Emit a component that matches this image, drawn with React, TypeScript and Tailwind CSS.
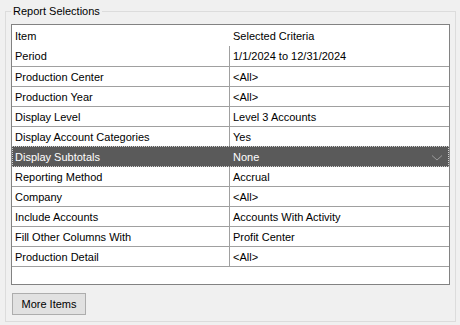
import React from "react";

const rows: [string, string][] = [
  ["Production Center", "<All>"],
  ["Production Year", "<All>"],
  ["Display Level", "Level 3 Accounts"],
  ["Display Account Categories", "Yes"],
  ["Display Subtotals", "None"],
  ["Reporting Method", "Accrual"],
  ["Company", "<All>"],
  ["Include Accounts", "Accounts With Activity"],
  ["Fill Other Columns With", "Profit Center"],
  ["Production Detail", "<All>"],
];

export default function App() {
  return (
    <div
      className="w-[460px] h-[325px] bg-[#f0f0f0] pt-[11px] pl-[5px] text-[11px] leading-[16px] text-black"
      style={{ fontFamily: '"Liberation Sans", Arial, sans-serif' }}
    >
      <div className="relative w-[451px] h-[311px] border border-[#dcdcdc] pt-[12px] pl-[5px]">
        <span className="absolute left-[5px] top-[-9px] px-[2px] bg-[#f0f0f0] leading-[16px]">
          Report Selections
        </span>
        <div className="w-[439px] h-[261px] border border-[#828282] bg-white flex flex-col">
          <div className="flex h-[21px] items-center">
            <div className="w-[218px] pl-[3px]">Item</div>
            <div className="pl-[3px]">Selected Criteria</div>
          </div>
          <div className="flex h-[21px] border-b border-[#a0a0a0]">
            <div className="w-[218px] pl-[3px] border-r border-[#a0a0a0] flex items-center">Period</div>
            <div className="pl-[3px] flex items-center">1/1/2024 to 12/31/2024</div>
          </div>
          {rows.map(([k, v]) =>
            k === "Display Subtotals" ? (
              <div
                key={k}
                className="flex h-[21px] -mt-[1px] items-center bg-[#5a5a5a] text-white border border-dotted border-[#d0d0d0]"
              >
                <div className="w-[217px] pl-[2px]">{k}</div>
                <div className="flex-1 pl-[3px]">{v}</div>
                <svg width="12" height="8" viewBox="0 0 12 8" className="mr-[5px] mt-[3px]">
                  <path d="M1 1.5 L6 6 L11 1.5" fill="none" stroke="#9a9a9a" strokeWidth="1" />
                </svg>
              </div>
            ) : (
              <div key={k} className="flex h-[20px] border-b border-[#a0a0a0]">
                <div className="w-[218px] pl-[3px] border-r border-[#a0a0a0] flex items-center">{k}</div>
                <div className="pl-[3px] flex items-center">{v}</div>
              </div>
            )
          )}
        </div>
        <button className="mt-[8px] ml-[1px] w-[74px] h-[22px] border border-[#adadad] bg-[#e1e1e1] flex items-center justify-center leading-[16px]">
          More Items
        </button>
      </div>
    </div>
  );
}
